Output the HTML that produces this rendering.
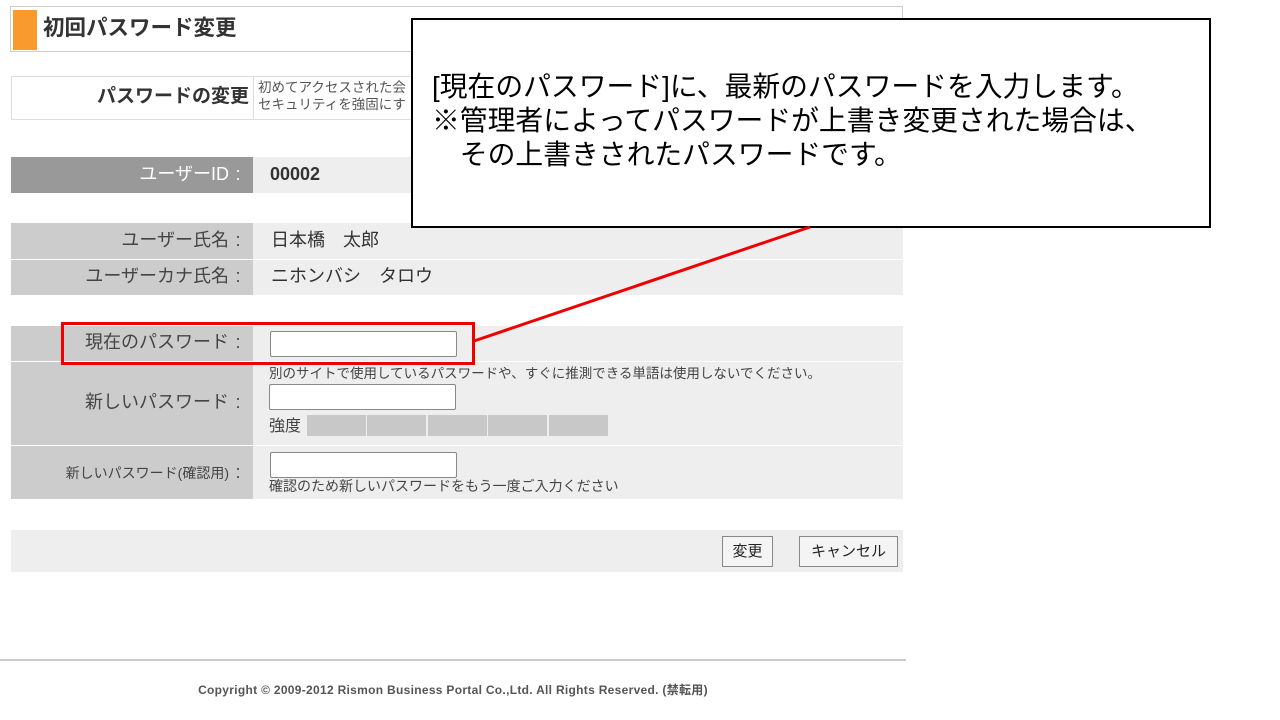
<!DOCTYPE html><html><head><meta charset="utf-8"><style>
body{margin:0;width:1280px;height:720px;background:#fff;position:relative;overflow:hidden;font-family:"Liberation Sans","Noto Sans CJK JP",sans-serif;color:#333}
.a{position:absolute}
.l{background:#ccc;text-align:right;box-sizing:border-box;padding-right:10px;color:#444;font-size:18px}
.r{background:#eee}
.in{position:absolute;background:#fff;border:1px solid #888;border-radius:2px;box-sizing:border-box;height:26px;width:187px}
.bar{position:absolute;top:415px;height:21px;width:59px;background:#c8c8c8}
.btn{position:absolute;border:1px solid #888;background:#f4f4f4;font-size:15px;text-align:center;line-height:29px;box-sizing:border-box;height:31px;top:536px;color:#222}
.c{display:inline-block;width:18px;text-align:center}
</style></head><body>
<div class="a" style="left:10px;top:6px;width:893px;height:46px;border:1px solid #ccc;box-sizing:border-box"></div>
<div class="a" style="left:13px;top:10px;width:24px;height:40px;background:#f99a2e"></div>
<div class="a" style="left:43px;top:15px;font-size:21.5px;font-weight:bold;color:#333;line-height:26px">初回パスワード変更</div>
<div class="a" style="left:11px;top:76px;width:892px;height:44px;border:1px solid #ddd;box-sizing:border-box"></div>
<div class="a" style="left:253px;top:77px;width:1px;height:42px;background:#ddd"></div>
<div class="a" style="left:11px;top:85px;width:238px;text-align:right;font-size:19px;font-weight:bold;color:#333;line-height:24px">パスワードの変更</div>
<div class="a" style="left:258px;top:79px;font-size:13.5px;line-height:17px;color:#555">初めてアクセスされた会<br>セキュリティを強固にす</div>
<div class="a" style="left:11px;top:157px;width:242px;height:36px;background:#999;color:#fff;text-align:right;box-sizing:border-box;padding-right:6px;font-size:18px;line-height:34px">ユーザーID<span class="c">:</span></div>
<div class="a r" style="left:253px;top:157px;width:650px;height:36px"></div>
<div class="a" style="left:270px;top:163px;font-size:18px;font-weight:bold;color:#333;line-height:22px">00002</div>
<div class="a l" style="left:11px;top:223px;width:242px;height:36px;line-height:34px;padding-right:6px">ユーザー氏名<span class="c">:</span></div>
<div class="a r" style="left:253px;top:223px;width:650px;height:36px"></div>
<div class="a" style="left:271px;top:228px;font-size:18px;line-height:24px">日本橋　太郎</div>
<div class="a l" style="left:11px;top:260px;width:242px;height:35px;line-height:33px;padding-right:6px">ユーザーカナ氏名<span class="c">:</span></div>
<div class="a r" style="left:253px;top:260px;width:650px;height:35px"></div>
<div class="a" style="left:271px;top:264px;font-size:18px;line-height:24px">ニホンバシ　タロウ</div>
<div class="a l" style="left:11px;top:326px;width:242px;height:35px;line-height:32px;padding-right:6px">現在のパスワード<span class="c">:</span></div>
<div class="a r" style="left:253px;top:326px;width:650px;height:35px"></div>
<div class="in" style="left:270px;top:331px"></div>
<div class="a l" style="left:11px;top:362px;width:242px;height:83px;line-height:80px;padding-right:6px">新しいパスワード<span class="c">:</span></div>
<div class="a r" style="left:253px;top:362px;width:650px;height:83px"></div>
<div class="a" style="left:269px;top:365px;font-size:13.5px;color:#444;line-height:17px">別のサイトで使用しているパスワードや、すぐに推測できる単語は使用しないでください。</div>
<div class="in" style="left:269px;top:384px"></div>
<div class="a" style="left:269px;top:416px;font-size:16px;color:#444;line-height:22px">強度</div>
<div class="bar" style="left:307px"></div><div class="bar" style="left:367px"></div><div class="bar" style="left:428px"></div><div class="bar" style="left:488px"></div><div class="bar" style="left:549px"></div>
<div class="a l" style="left:11px;top:446px;width:242px;height:53px;line-height:52px;font-size:14px;padding-right:6px">新しいパスワード(確認用)<span class="c" style="font-size:18px">:</span></div>
<div class="a r" style="left:253px;top:446px;width:650px;height:53px"></div>
<div class="in" style="left:270px;top:452px"></div>
<div class="a" style="left:269px;top:477px;font-size:14px;color:#444;line-height:18px">確認のため新しいパスワードをもう一度ご入力ください</div>
<div class="a r" style="left:11px;top:530px;width:892px;height:42px"></div>
<div class="btn" style="left:722px;width:51px">変更</div>
<div class="btn" style="left:799px;width:99px">キャンセル</div>
<div class="a" style="left:0;top:659px;width:906px;height:2px;background:#ccc"></div>
<div class="a" style="left:0;top:681px;width:906px;text-align:center;font-size:12px;font-weight:bold;color:#555;letter-spacing:0.3px">Copyright © 2009-2012 Rismon Business Portal Co.,Ltd. All Rights Reserved. (禁転用)</div>
<div class="a" style="left:411px;top:18px;width:800px;height:210px;border:2px solid #000;background:#fff;box-sizing:border-box"></div>
<div class="a" style="left:432px;top:70px;font-size:27.8px;line-height:34px;color:#000;white-space:nowrap">[現在のパスワード]に、最新のパスワードを入力します。<br>※管理者によってパスワードが上書き変更された場合は、<br>　その上書きされたパスワードです。</div>
<svg class="a" style="left:0;top:0" width="1280" height="720"><line x1="474" y1="341" x2="810" y2="227" stroke="#e00" stroke-width="3"/><rect x="62.5" y="323.5" width="411" height="40" fill="none" stroke="#e00" stroke-width="3"/></svg>
</body></html>
